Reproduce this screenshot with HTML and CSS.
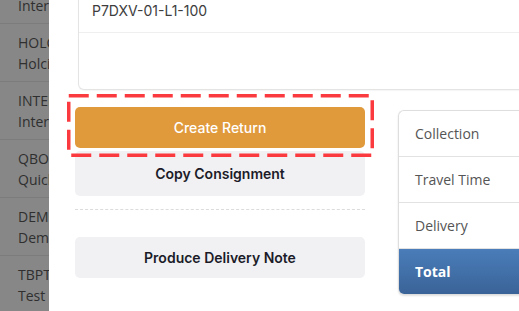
FILE: index.html
```html
<!DOCTYPE html>
<html>

<head>
  <title>Consignment</title>
  <link rel="stylesheet" href="styles.css">
</head>

<body>
  <div class="screen">
    <div class="side">
      <ul class="side-list">
        <li><span>INTL</span><span>International</span></li>
        <li><span>HOLCIM</span><span>Holcim</span></li>
        <li><span>INTERNAL</span><span>Internal</span></li>
        <li><span>QBOOKS</span><span>Quickbooks</span></li>
        <li><span>DEMO</span><span>Demo</span></li>
        <li><span>TBPT</span><span>Test Co</span></li>
      </ul>
    </div>

    <div class="modal">
      <div class="ref-card">
        <div class="ref-row">P7DXV-01-L1-100</div>
        <div class="ref-empty"></div>
      </div>

      <div class="lower">
        <div class="actions">
          <svg class="highlight" width="307" height="63" viewBox="0 0 307 63">
            <rect x="1.75" y="1.75" width="303.5" height="59.5" fill="none" stroke="#fb3a3f" stroke-width="3.5" stroke-dasharray="20 8"/>
          </svg>
          <button type="button" class="btn btn-primary">Create Return</button>
          <button type="button" class="btn btn-light btn-copy">Copy Consignment</button>
          <hr class="divider">
          <button type="button" class="btn btn-light">Produce Delivery Note</button>
        </div>

        <div class="summary">
          <div class="summary-row">Collection</div>
          <div class="summary-row">Travel Time</div>
          <div class="summary-row">Delivery</div>
          <div class="summary-row total">Total</div>
        </div>
      </div>
    </div>
  </div>
</body>

</html>
```

FILE: styles.css
```css
body {
  margin: 0;
  width: 519px;
  height: 311px;
  overflow: hidden;
  background-color: #fff;
}

.screen {
  display: flex;
  height: 311px;
}

.side {
  width: 49px;
  flex: none;
  overflow: hidden;
  background-color: #878787;
  font-family: "Open Sans", sans-serif;
  font-size: 14px;
  color: #2f2f2f;
}

.side-list {
  list-style: none;
  margin: -34px 0 0 0;
  padding: 0;
}

.side-list li {
  display: flex;
  flex-direction: column;
  padding: 8px 0 7px 18px;
  line-height: 21px;
  white-space: nowrap;
  border-bottom: 1px solid #7c7c7c;
}

.modal {
  flex: 1;
  overflow: hidden;
  background-color: #fff;
}

.ref-card {
  margin: 0 -20px 0 29px;
  border: 1px solid #e4e4e4;
  border-top: none;
  border-radius: 0 0 0 6px;
  height: 89px;
  box-shadow: 0 1px 1px rgba(0, 0, 0, 0.04);
}

.ref-row {
  font-family: Inter, sans-serif;
  font-size: 14px;
  color: #3d3d3d;
  height: 32px;
  line-height: 22px;
  padding-left: 13px;
  border-bottom: 1px solid #efefef;
}

.lower {
  display: flex;
  align-items: flex-start;
  gap: 33px;
  padding: 17px 0 0 26px;
}

.actions {
  position: relative;
  width: 290px;
  flex: none;
  display: flex;
  flex-direction: column;
}

.highlight {
  position: absolute;
  left: -8px;
  top: -13px;
}

.btn {
  font-family: Inter, sans-serif;
  font-size: 14px;
  height: 41px;
  border: none;
  border-radius: 5px;
  cursor: pointer;
}

.btn-primary {
  background-color: #e0993b;
  color: #fff;
  font-weight: 500;
}

.btn-light {
  background-color: #f1f1f4;
  color: #1c1c28;
  font-weight: 600;
}

.btn-copy {
  margin-top: 3px;
  height: 45px;
}

.divider {
  border: none;
  border-top: 1px dashed #dcdcdc;
  margin: 13px 0 27px 0;
}

.summary {
  margin-top: 3px;
  width: 160px;
  flex: none;
  border: 1px solid #dedede;
  border-right: none;
  border-radius: 6px 0 0 6px;
  font-family: "Open Sans", sans-serif;
  font-size: 14px;
  color: #555;
  box-shadow: 0 1px 2px rgba(0, 0, 0, 0.12);
  overflow: hidden;
}

.summary-row {
  height: 45px;
  line-height: 45px;
  padding-left: 16px;
  border-bottom: 1px solid #e2e2e2;
}

.summary-row.total {
  border-bottom: none;
  background: linear-gradient(#4a7db9, #3a6398);
  color: #fff;
  font-weight: 700;
}
```
